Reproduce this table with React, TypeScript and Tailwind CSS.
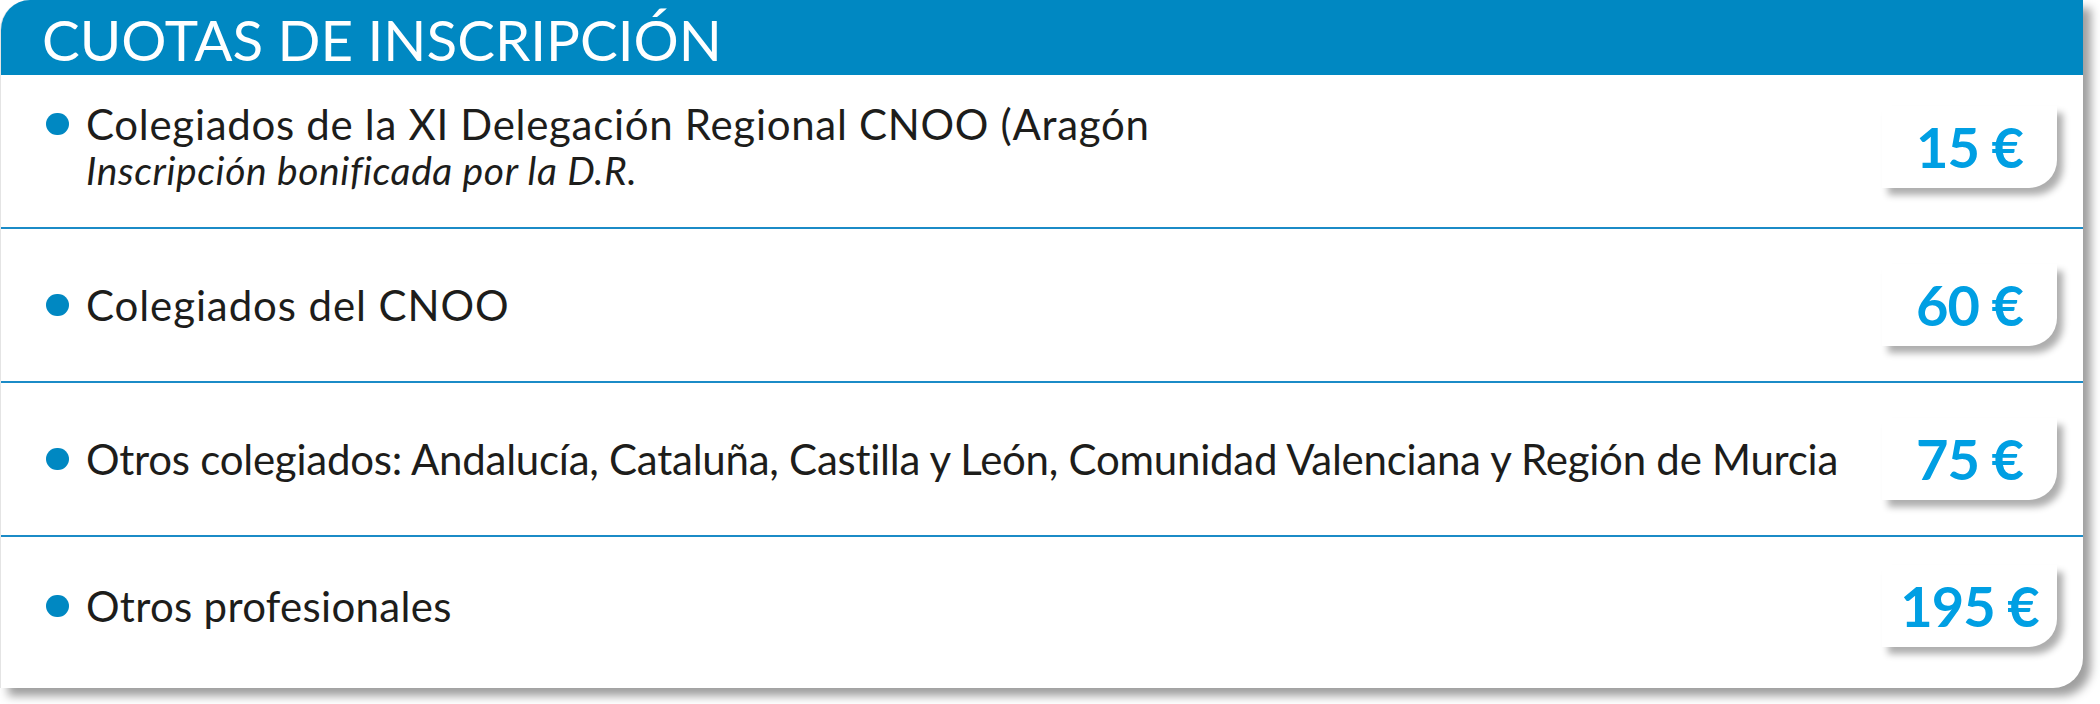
const rows = [
  {
    label: "Colegiados de la XI Delegación Regional CNOO (Aragón",
    note: "Inscripción bonificada por la D.R.",
    price: "15 €",
    track: "tracking-[0.7px]",
  },
  { label: "Colegiados del CNOO", price: "60 €", track: "tracking-[0.9px]" },
  {
    label:
      "Otros colegiados: Andalucía, Cataluña, Castilla y León, Comunidad Valenciana y Región de Murcia",
    price: "75 €",
    track: "tracking-[-0.25px]",
  },
  { label: "Otros profesionales", price: "195 €", track: "tracking-[0.3px]" },
];

function Price({ value }: { value: string }) {
  return (
    <div className="w-[175px] h-[82px] shrink-0 bg-white rounded-br-[28px] shadow-[6px_7px_7px_rgba(0,0,0,0.32)] flex items-center justify-center">
      <span className="text-[#009fe3] font-bold text-[56px] leading-none tracking-[-1px]">
        {value}
      </span>
    </div>
  );
}

export default function App() {
  return (
    <div className="w-[2100px] h-[704px] bg-white font-['Lato',sans-serif]">
      <div className="w-[2083px] h-[688px] bg-white rounded-tl-[30px] rounded-br-[30px] border-l border-[#e4e4e4] shadow-[8px_8px_10px_rgba(0,0,0,0.38)] overflow-hidden flex flex-col">
        {/* Header */}
        <div className="h-[75px] shrink-0 bg-[#0088c2] flex items-center pl-[41px]">
          <h2 className="text-white text-[56.5px] leading-none pt-[4px]">
            CUOTAS DE INSCRIPCIÓN
          </h2>
        </div>

        {/* Rows */}
        {rows.map((row, i) => {
          const last = i === rows.length - 1;
          let cls =
            "h-[154px] border-b-2 border-[#1b8bc7] flex items-center pl-[45px] pr-[26px]";
          if (last) cls = "h-[151px] flex items-center pl-[45px] pr-[26px] pb-[14px]";
          if (row.note) cls += " pb-[8px]";
          return (
            <div key={row.label} className={cls}>
              <div className="flex-1 text-[#1d1d1b]">
                <div className="flex items-center gap-[17px]">
                  <span className="w-[23px] h-[22px] rounded-full bg-[#0088c2] shrink-0" />
                  <span className={`text-[42px] leading-[46px] ${row.track}`}>{row.label}</span>
                </div>
                {row.note && (
                  <div className="pl-[40px] italic text-[39px] leading-[46px] tracking-[0.6px]">
                    {row.note}
                  </div>
                )}
              </div>
              <Price value={row.price} />
            </div>
          );
        })}
      </div>
    </div>
  );
}
